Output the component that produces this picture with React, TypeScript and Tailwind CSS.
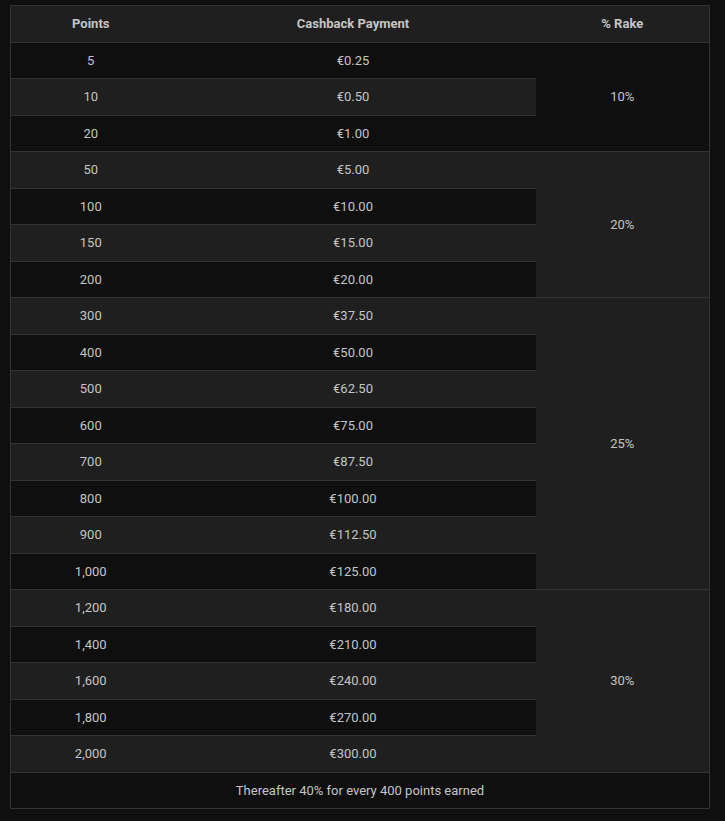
const rows: [string, string][] = [
  ["5", "€0.25"],
  ["10", "€0.50"],
  ["20", "€1.00"],
  ["50", "€5.00"],
  ["100", "€10.00"],
  ["150", "€15.00"],
  ["200", "€20.00"],
  ["300", "€37.50"],
  ["400", "€50.00"],
  ["500", "€62.50"],
  ["600", "€75.00"],
  ["700", "€87.50"],
  ["800", "€100.00"],
  ["900", "€112.50"],
  ["1,000", "€125.00"],
  ["1,200", "€180.00"],
  ["1,400", "€210.00"],
  ["1,600", "€240.00"],
  ["1,800", "€270.00"],
  ["2,000", "€300.00"],
];

// rake tiers keyed by the row index where they start
const rake: Record<number, { label: string; span: number }> = {
  0: { label: "10%", span: 3 },
  3: { label: "20%", span: 4 },
  7: { label: "25%", span: 8 },
  15: { label: "30%", span: 5 },
};

export default function App() {
  return (
    <div className="min-h-[821px] w-full bg-[#0f0f0f] pt-[5px] pl-[10px] font-['Roboto',sans-serif] text-[13px] text-[#c4c4c4]">
      <table className="w-[700px] border-collapse border border-[#333333] text-center">
        <thead>
          <tr className="h-[36.5px] bg-[#1f1f1f]">
            <th className="w-[160px] border-b border-[#333333] font-bold">Points</th>
            <th className="w-[365px] border-b border-[#333333] font-bold">Cashback Payment</th>
            <th className="border-b border-[#333333] font-bold">% Rake</th>
          </tr>
        </thead>
        <tbody>
          {rows.map(([pts, cash], i) => {
            const bg = i % 2 === 1 ? "bg-[#1f1f1f]" : "bg-[#0f0f0f]";
            const tier = rake[i];
            return (
              <tr key={pts} className={`h-[36.5px] ${bg}`}>
                <td className="border-t border-[#333333]">{pts}</td>
                <td className="border-t border-[#333333]">{cash}</td>
                {tier && (
                  <td rowSpan={tier.span} className={`border-t border-[#333333] ${bg}`}>
                    {tier.label}
                  </td>
                )}
              </tr>
            );
          })}
          <tr className="h-[36.5px] bg-[#0f0f0f]">
            <td colSpan={3} className="border-t border-[#333333]">
              Thereafter 40% for every 400 points earned
            </td>
          </tr>
        </tbody>
      </table>
    </div>
  );
}
